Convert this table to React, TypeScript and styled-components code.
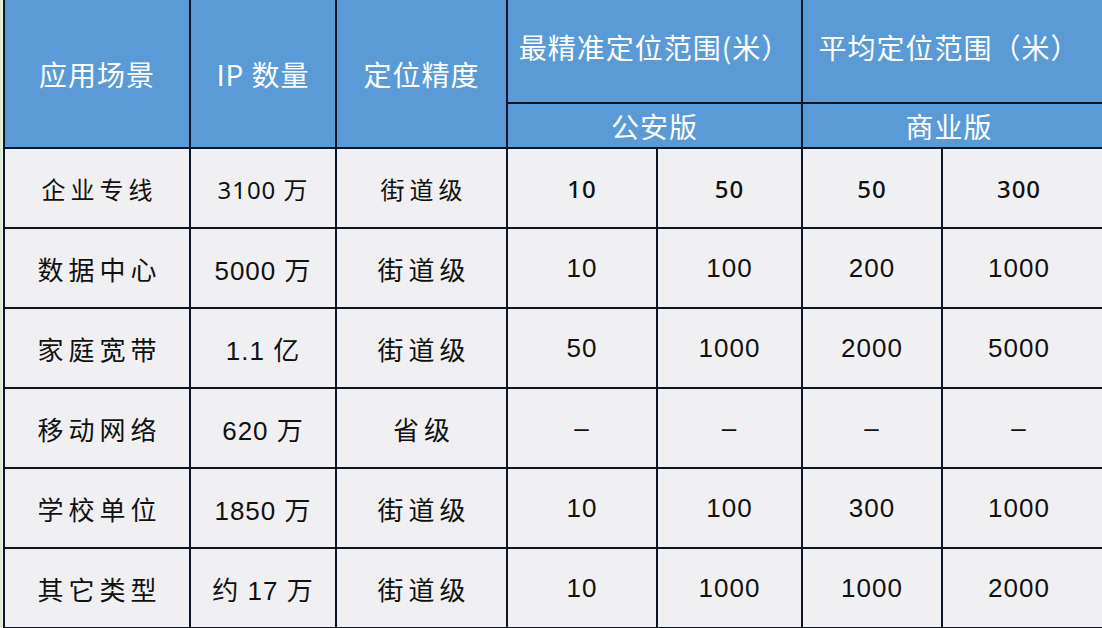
import React from 'react';
import styled, { createGlobalStyle } from 'styled-components';

const BLUE = '#5a9bd7';
const LINE = '#0c1624';
const CELL_BG = '#f0f0f2';

const GlobalStyle = createGlobalStyle`
  html, body {
    margin: 0;
    padding: 0;
    background: ${CELL_BG};
    overflow: hidden;
  }
`;

type Cell = { text: string; spaced?: boolean; strong?: boolean };
type RowData = { narrow?: boolean; cells: Cell[] };

const rows: RowData[] = [
  {
    narrow: true,
    cells: [
      { text: '企业专线', spaced: true },
      { text: '3100 万' },
      { text: '街道级', spaced: true },
      { text: '10', strong: true },
      { text: '50', strong: true },
      { text: '50', strong: true },
      { text: '300', strong: true },
    ],
  },
  {
    cells: [
      { text: '数据中心', spaced: true },
      { text: '5000 万' },
      { text: '街道级', spaced: true },
      { text: '10' },
      { text: '100' },
      { text: '200' },
      { text: '1000' },
    ],
  },
  {
    cells: [
      { text: '家庭宽带', spaced: true },
      { text: '1.1 亿' },
      { text: '街道级', spaced: true },
      { text: '50' },
      { text: '1000' },
      { text: '2000' },
      { text: '5000' },
    ],
  },
  {
    cells: [
      { text: '移动网络', spaced: true },
      { text: '620 万' },
      { text: '省级', spaced: true },
      { text: '–' },
      { text: '–' },
      { text: '–' },
      { text: '–' },
    ],
  },
  {
    cells: [
      { text: '学校单位', spaced: true },
      { text: '1850 万' },
      { text: '街道级', spaced: true },
      { text: '10' },
      { text: '100' },
      { text: '300' },
      { text: '1000' },
    ],
  },
  {
    cells: [
      { text: '其它类型', spaced: true },
      { text: '约 17 万' },
      { text: '街道级', spaced: true },
      { text: '10' },
      { text: '1000' },
      { text: '1000' },
      { text: '2000' },
    ],
  },
];

// the last column runs past the right edge of the screenshot
const colWidths = [186, 146, 171, 150, 145, 140, 164];

function App() {
  return (
    <>
      <GlobalStyle />
      <Page>
        <Table>
          <colgroup>
            {colWidths.map((w, i) => (
              <col key={i} style={{ width: w }} />
            ))}
          </colgroup>
          <thead>
            <tr>
              <HeadCell rowSpan={2} $height={104 + 45}>
                应用场景
              </HeadCell>
              <HeadCell rowSpan={2}>IP 数量</HeadCell>
              <HeadCell rowSpan={2}>定位精度</HeadCell>
              <HeadCell colSpan={2} $height={104} $lift>
                最精准定位范围(米）
              </HeadCell>
              <HeadCell colSpan={2} $lift>
                平均定位范围（米）
              </HeadCell>
            </tr>
            <tr>
              <HeadCell colSpan={2} $height={45}>
                公安版
              </HeadCell>
              <HeadCell colSpan={2}>商业版</HeadCell>
            </tr>
          </thead>
          <tbody>
            {rows.map((row, r) => (
              <tr key={r}>
                {row.cells.map((cell, c) => (
                  <BodyCell
                    key={c}
                    $narrow={row.narrow}
                    $spaced={cell.spaced}
                    $strong={cell.strong}
                  >
                    {cell.text}
                  </BodyCell>
                ))}
              </tr>
            ))}
          </tbody>
        </Table>
      </Page>
    </>
  );
}

export default App;

const Page = styled.div`
  width: 1102px;
  height: 628px;
  overflow: hidden;
  padding-left: 3px;
  box-sizing: border-box;
  background: linear-gradient(to right, #d6ead0 0, #eef6ec 3px, ${CELL_BG} 3px);
`;

const Table = styled.table`
  border-collapse: collapse;
  table-layout: fixed;
  width: 1104px;
  margin-top: -2px;

  th:last-child,
  td:last-child {
    padding-right: 10px;
  }
`;

const HeadCell = styled.th<{ $height?: number; $lift?: boolean }>`
  height: ${(p) => (p.$height ? `${p.$height}px` : 'auto')};
  padding: 0 0 ${(p) => (p.$lift ? '8px' : '0')};
  box-sizing: border-box;
  border: 2px solid ${LINE};
  background: ${BLUE};
  color: #ffffff;
  font-family: 'Noto Sans CJK SC', 'Noto Sans', sans-serif;
  font-size: 28px;
  font-weight: 400;
  letter-spacing: 1px;
  text-align: center;
  vertical-align: middle;
  white-space: nowrap;
`;

const BodyCell = styled.td<{ $narrow?: boolean; $spaced?: boolean; $strong?: boolean }>`
  height: 80px;
  padding: 0;
  box-sizing: border-box;
  border: 2px solid ${LINE};
  background: ${CELL_BG};
  color: #111111;
  font-family: ${(p) =>
    p.$narrow
      ? "'Noto Sans', 'Noto Sans CJK SC', sans-serif"
      : "'Liberation Sans', 'Noto Sans CJK SC', sans-serif"};
  font-size: ${(p) => (p.$narrow ? '24px' : '26px')};
  font-weight: ${(p) => (p.$strong ? 500 : 400)};
  letter-spacing: ${(p) => (p.$spaced ? '5px' : '1px')};
  text-indent: ${(p) => (p.$spaced ? '5px' : '0')};
  text-align: center;
  vertical-align: middle;
  white-space: nowrap;
`;
